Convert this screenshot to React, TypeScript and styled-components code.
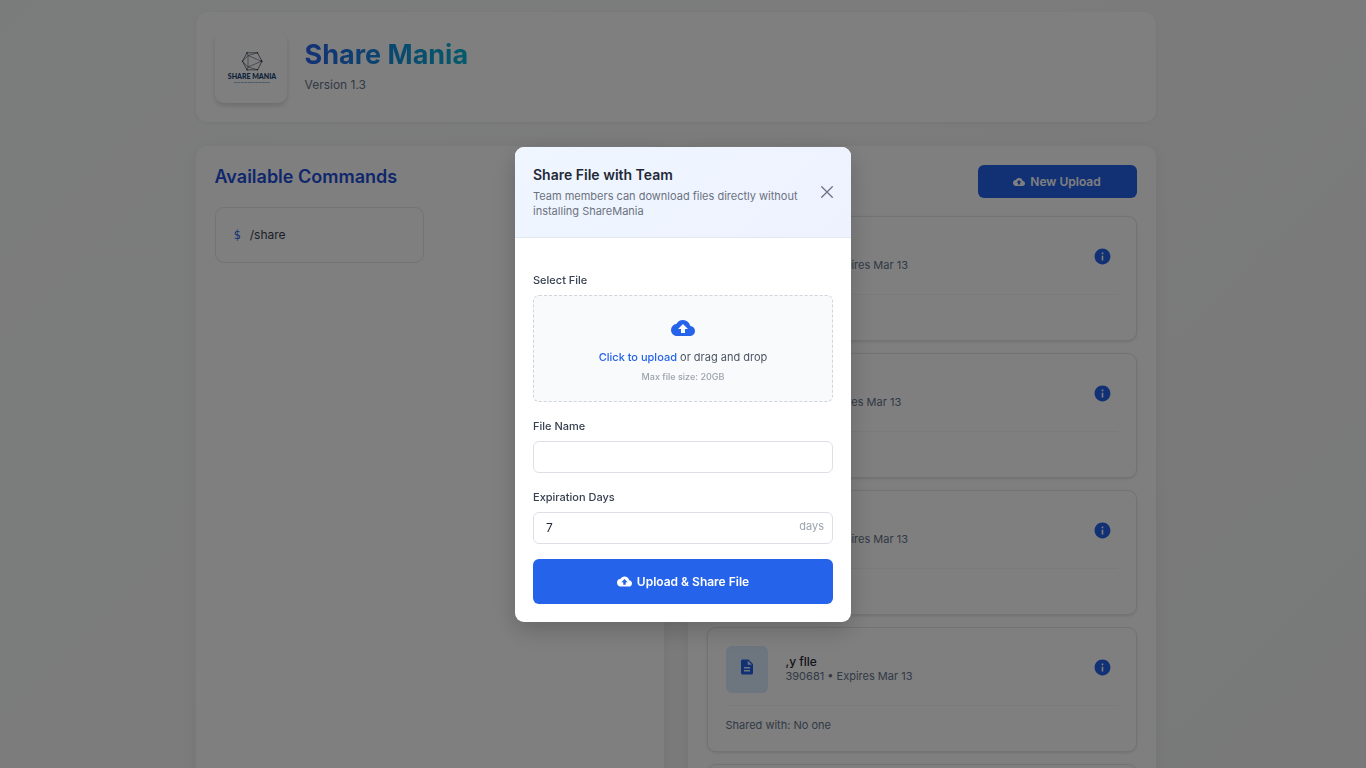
import React from "react";
import styled, { createGlobalStyle } from "styled-components";
import { MdCloudUpload, MdDescription, MdInfo } from "react-icons/md";

const GlobalStyle = createGlobalStyle`
  *, *::before, *::after { box-sizing: border-box; }
  body {
    margin: 0;
    overflow: hidden;
    font-family: Inter, "Liberation Sans", sans-serif;
    font-size: 12px;
    line-height: 18px;
    color: #1f2937;
    background: #f3f4f6;
  }
  button, input { font-family: inherit; }
  h1, h2, h3, p, ul { margin: 0; padding: 0; }
`;

const Page = styled.div`
  min-height: 100vh;
  padding: 12px 27px 12px 12px;
  background: linear-gradient(135deg, #f5f9f7 0%, #f8f8f8 40%, #f1f2f2 100%);
`;

const Container = styled.div`
  max-width: 960px;
  margin: 0 auto;
  display: flex;
  flex-direction: column;
  gap: 24px;
`;

const Header = styled.header`
  display: flex;
  align-items: center;
  gap: 18px;
  padding: 19px;
  border-radius: 12px;
  background: #fff;
  box-shadow: 0 1px 4px rgba(0, 0, 0, 0.06);
`;

const LogoBox = styled.div`
  width: 72px;
  height: 72px;
  flex: none;
  border-radius: 9px;
  background: #fff;
  box-shadow: 0 3px 5px rgba(0, 0, 0, 0.14);
`;

const HeaderText = styled.div`
  padding-bottom: 2px;
`;

const Title = styled.h1`
  width: fit-content;
  font-size: 27px;
  line-height: 34px;
  font-weight: 700;
  color: transparent;
  background: linear-gradient(90deg, #2563eb, #06b6d4);
  background-clip: text;
`;

const Version = styled.p`
  margin-top: 4px;
  line-height: 18px;
  color: #64748b;
`;

const Columns = styled.main`
  display: grid;
  grid-template-columns: 1fr 1fr;
  gap: 24px;
`;

const Panel = styled.section`
  padding: 19px;
  border-radius: 12px;
  background: #fff;
  box-shadow: 0 4px 18px rgba(0, 0, 0, 0.06);
`;

const PanelTitle = styled.h2<{ $spaced?: boolean }>`
  margin-bottom: ${(p) => (p.$spaced ? "18px" : "0")};
  font-size: 18px;
  line-height: 24px;
  font-weight: 600;
  color: #1d4ed8;
`;

const CommandGrid = styled.ul`
  display: grid;
  grid-template-columns: 1fr 1fr;
  gap: 12px;
  list-style: none;
`;

const Command = styled.li`
  display: flex;
  gap: 9px;
  padding: 18px;
  border: 1px solid #e5e7eb;
  border-radius: 9px;
  color: #374151;
`;

const Prompt = styled.span`
  font-family: "DejaVu Sans Mono", monospace;
  color: #2563eb;
`;

const PanelHead = styled.div`
  display: flex;
  align-items: center;
  justify-content: space-between;
  margin-bottom: 18px;
`;

const PrimaryButton = styled.button<{ $full?: boolean }>`
  display: flex;
  align-items: center;
  justify-content: center;
  gap: 5px;
  width: ${(p) => (p.$full ? "100%" : "159px")};
  height: ${(p) => (p.$full ? "45px" : "33px")};
  margin-top: ${(p) => (p.$full ? "15px" : "0")};
  border: 0;
  border-radius: 6px;
  background: #2563eb;
  color: #fff;
  font-size: 12px;
  font-weight: 600;
`;

const FileList = styled.ul`
  display: flex;
  flex-direction: column;
  gap: 12px;
  list-style: none;
`;

const FileCard = styled.li`
  padding: 18px;
  border: 1px solid #e5e7eb;
  border-radius: 9px;
  background: #fff;
  box-shadow: 0 1px 3px rgba(0, 0, 0, 0.12);
`;

const FileRow = styled.div`
  display: flex;
  align-items: center;
  gap: 18px;
  padding-bottom: 12px;
  border-bottom: 1px solid #f3f4f6;
`;

const FileThumb = styled.div`
  display: flex;
  align-items: center;
  justify-content: center;
  width: 42px;
  height: 47px;
  padding-bottom: 5px;
  border-radius: 6px;
  background: #dbeafe;
  color: #2563eb;
`;

const FileText = styled.div`
  flex: 1;
`;

const FileName = styled.h3`
  font-size: 12px;
  line-height: 14px;
  font-weight: 500;
`;

const FileMeta = styled.p`
  font-size: 11px;
  line-height: 15px;
  color: #64748b;
`;

const InfoButton = styled.button`
  display: flex;
  margin-bottom: 4px;
  padding: 6px;
  border: 0;
  background: none;
  color: #2563eb;
`;

const SharedWith = styled.p`
  padding-top: 12px;
  font-size: 11px;
  line-height: 15px;
  color: #64748b;
`;

const Overlay = styled.div`
  position: fixed;
  inset: 0;
  display: flex;
  align-items: center;
  justify-content: center;
  background: rgba(0, 0, 0, 0.5);
`;

const Dialog = styled.div`
  width: 336px;
  overflow: hidden;
  border-radius: 9px;
  background: #fff;
  box-shadow: 0 8px 24px rgba(0, 0, 0, 0.2);
`;

const DialogHead = styled.div`
  display: flex;
  align-items: center;
  justify-content: space-between;
  gap: 18px;
  padding: 18px;
  border-bottom: 1px solid #e2e8f0;
  background: linear-gradient(135deg, #eff6ff, #eef2ff);
`;

const DialogTitle = styled.h2`
  margin-bottom: 4px;
  font-size: 14px;
  line-height: 20px;
  font-weight: 600;
`;

const DialogNote = styled.p`
  font-size: 11px;
  line-height: 15px;
  color: #6b7280;
`;

const CloseButton = styled.button`
  display: flex;
  flex: none;
  padding: 0;
  border: 0;
  background: none;
  color: #6b7280;
`;

const DialogBody = styled.form`
  padding: 18px;
`;

const Field = styled.div`
  margin-top: 15px;
`;

const Label = styled.label`
  display: block;
  margin-bottom: 6px;
  font-size: 11px;
  line-height: 18px;
  font-weight: 500;
  color: #374151;
`;

const HiddenFile = styled.input`
  position: absolute;
  width: 1px;
  height: 1px;
  opacity: 0;
`;

const DropZone = styled.label`
  display: flex;
  flex-direction: column;
  align-items: center;
  padding: 20px 18px 16px;
  border: 1px dashed #d1d5db;
  border-radius: 6px;
  background: #f9fafb;
  color: #2563eb;
`;

const DropText = styled.span`
  margin: 9px 0 4px;
  font-size: 11px;
  line-height: 16px;
  color: #4b5563;
`;

const DropLink = styled.span`
  font-weight: 500;
  color: #2563eb;
`;

const DropHint = styled.span`
  font-size: 9px;
  line-height: 16px;
  font-weight: 500;
  color: #9ca3af;
`;

const InputFrame = styled.div`
  display: flex;
  align-items: center;
  height: 32px;
  padding: 0 8px 0 12px;
  border: 1px solid #dcdfe6;
  border-radius: 6px;
  background: #fff;
`;

const TextInput = styled.input`
  flex: 1;
  min-width: 0;
  padding: 0;
  border: 0;
  outline: 0;
  background: none;
  font-size: 12px;
  line-height: 18px;
  color: #1f2937;
`;

const Suffix = styled.span`
  padding-bottom: 3px;
  font-size: 11px;
  color: #9ca3af;
`;

const files = [
  { name: "report", size: "39068" },
  { name: "notes", size: "3906" },
  { name: "my file", size: "39068" },
  { name: ",y flle", size: "390681" },
  { name: "archive", size: "390681" },
];

function Logo() {
  return (
    <svg width="72" height="72" viewBox="0 0 72 72" role="img" aria-label="Share Mania logo">
      <g fill="none" stroke="#4b5563" strokeWidth="0.8" strokeLinejoin="round">
        <path d="M32 21.800h10.500l4.500 8.500-4.500 8.500H32l-4.500-8.500z" />
        <path d="M33 24.500v11.500l13.500-5.700zM32 21.800l1 2.700 9.500-2.700M42.500 38.800l-9.500-2.800-1 2.800M33 24.500l-5.500 5.800 5.500 5.700" strokeWidth="0.6" />
      </g>
      <g fill="#374151">
        <circle cx="32" cy="21.800" r="0.700" />
        <circle cx="42.500" cy="21.800" r="0.700" />
        <circle cx="46.500" cy="30.300" r="1" />
        <circle cx="42.500" cy="38.800" r="0.700" />
        <circle cx="32" cy="38.800" r="0.700" />
        <circle cx="27.500" cy="30.300" r="0.700" />
      </g>
      <text x="37" y="48" textAnchor="middle" fontFamily="Lato, sans-serif" fontWeight="900" fontSize="7" fill="#144272">
        SHARE MANIA
      </text>
      <path d="M19 51.500h36" stroke="#6b9ac4" strokeWidth="0.700" strokeDasharray="3 0.500" />
    </svg>
  );
}

export default function App() {
  return (
    <>
      <GlobalStyle />
      <Page>
        <Container>
          <Header>
            <LogoBox>
              <Logo />
            </LogoBox>
            <HeaderText>
              <Title>Share Mania</Title>
              <Version>Version 1.3</Version>
            </HeaderText>
          </Header>
          <Columns>
            <Panel>
              <PanelTitle $spaced>Available Commands</PanelTitle>
              <CommandGrid>
                <Command>
                  <Prompt>$</Prompt>
                  <span>/share</span>
                </Command>
              </CommandGrid>
            </Panel>
            <Panel>
              <PanelHead>
                <PanelTitle>Shared Files</PanelTitle>
                <PrimaryButton type="button">
                  <MdCloudUpload size={12} />
                  New Upload
                </PrimaryButton>
              </PanelHead>
              <FileList>
                {files.map((file) => (
                  <FileCard key={file.name}>
                    <FileRow>
                      <FileThumb>
                        <MdDescription size={18} />
                      </FileThumb>
                      <FileText>
                        <FileName>{file.name}</FileName>
                        <FileMeta>{file.size} • Expires Mar 13</FileMeta>
                      </FileText>
                      <InfoButton type="button" aria-label="File details">
                        <MdInfo size={19} />
                      </InfoButton>
                    </FileRow>
                    <SharedWith>Shared with: No one</SharedWith>
                  </FileCard>
                ))}
              </FileList>
            </Panel>
          </Columns>
        </Container>
      </Page>
      <Overlay>
        <Dialog role="dialog" aria-modal="true" aria-labelledby="dialog-title">
          <DialogHead>
            <div>
              <DialogTitle id="dialog-title">Share File with Team</DialogTitle>
              <DialogNote>Team members can download files directly without installing ShareMania</DialogNote>
            </div>
            <CloseButton type="button" aria-label="Close">
              <svg width="12" height="12" viewBox="0 0 12 12" fill="none" stroke="currentColor" strokeWidth="1.300" strokeLinecap="round">
                <path d="M0.700 0.700l10.600 10.600M11.300 0.700L0.700 11.300" />
              </svg>
            </CloseButton>
          </DialogHead>
          <DialogBody>
            <Field>
              <Label htmlFor="file">Select File</Label>
              <HiddenFile id="file" type="file" />
              <DropZone htmlFor="file">
                <MdCloudUpload size={24} />
                <DropText>
                  <DropLink>Click to upload</DropLink> or drag and drop
                </DropText>
                <DropHint>Max file size: 20GB</DropHint>
              </DropZone>
            </Field>
            <Field>
              <Label htmlFor="name">File Name</Label>
              <InputFrame>
                <TextInput id="name" type="text" />
              </InputFrame>
            </Field>
            <Field>
              <Label htmlFor="days">Expiration Days</Label>
              <InputFrame>
                <TextInput id="days" type="text" inputMode="numeric" defaultValue="7" />
                <Suffix>days</Suffix>
              </InputFrame>
            </Field>
            <PrimaryButton type="button" $full>
              <MdCloudUpload size={15} />
              Upload &amp; Share File
            </PrimaryButton>
          </DialogBody>
        </Dialog>
      </Overlay>
    </>
  );
}
